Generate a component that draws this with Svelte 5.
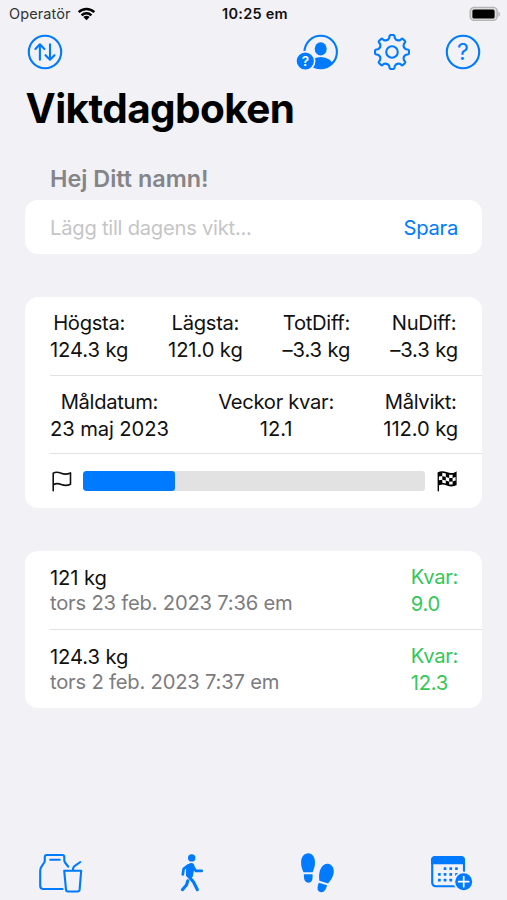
<script>
  let weight = '';

  const stats = [
    { label: 'Högsta:', value: '124.3 kg' },
    { label: 'Lägsta:', value: '121.0 kg' },
    { label: 'TotDiff:', value: '–3.3 kg' },
    { label: 'NuDiff:', value: '–3.3 kg' }
  ];

  const goals = [
    { label: 'Måldatum:', value: '23 maj 2023' },
    { label: 'Veckor kvar:', value: '12.1' },
    { label: 'Målvikt:', value: '112.0 kg' }
  ];

  const entries = [
    { weight: '121 kg', date: 'tors 23 feb. 2023 7:36 em', left: '9.0' },
    { weight: '124.3 kg', date: 'tors 2 feb. 2023 7:37 em', left: '12.3' }
  ];

  // (124.3 - 121) / (124.3 - 112)
  const progress = (3.3 / 12.3) * 100;

  // Outline of the settings gear, eight teeth around 0,0
  function gearPath() {
    const at = (deg, r) => {
      const a = (deg * Math.PI) / 180;
      return `${(Math.cos(a) * r).toFixed(2)} ${(Math.sin(a) * r).toFixed(2)}`;
    };
    let d = `M${at(-9, 16)}`;
    for (let i = 0; i < 8; i++) {
      const c = i * 45;
      d += `Q${at(c - 8.5, 17)} ${at(c - 5, 17)}L${at(c + 5, 17)}Q${at(c + 8.5, 17)} ${at(c + 9, 16)}`;
      d += `L${at(c + 11, 14.3)}Q${at(c + 22.5, 11.6)} ${at(c + 34, 14.3)}L${at(c + 36, 16)}`;
    }
    return d + 'Z';
  }

  // Calendar days as [column, row]
  const days = [[1, 0], [2, 0], [3, 0], [0, 1], [1, 1], [2, 1], [3, 1], [0, 2], [1, 2], [2, 2]];
</script>

<main>
  <div class="status-bar">
    <div class="carrier">
      <span>Operatör</span>
      <svg width="19" height="14" viewBox="0 0 18 14">
        <path d="M1.2 5.2a11 11 0 0 1 15.6 0M4.1 8.3a7 7 0 0 1 9.8 0" fill="none" stroke="#000" stroke-width="2.4" />
        <path d="M9 13.2 5.9 10.1a4.4 4.4 0 0 1 6.2 0Z" />
      </svg>
    </div>
    <span class="clock">10:25 em</span>
    <div class="battery">
      <svg width="32" height="16" viewBox="0 0 32 16">
        <rect x="1.2" y="1.4" width="27" height="13" rx="4" fill="#dcdcde" stroke="#b4b4b7" stroke-width="1.4" />
        <rect x="3.4" y="3.4" width="22.2" height="9.2" rx="1.6" />
        <path d="M29.5 5.4c1.8.8 1.8 4.4 0 5.2Z" fill="#a9a9ad" />
      </svg>
    </div>
  </div>

  <nav class="toolbar">
    <button aria-label="Sortera">
      <svg class="line" width="36" height="36" viewBox="0 0 36 36">
        <circle cx="18" cy="18" r="16.2" />
        <path d="M12.9 25.7V10.5M8.4 14.9l4.5-4.6 4.5 4.6M23 10.3v15.2M18.5 21.2l4.5 4.5 4.5-4.5" />
      </svg>
    </button>
    <div class="actions">
      <button aria-label="Profil">
        <svg width="44" height="38" viewBox="0 0 44 38">
          <defs>
            <clipPath id="avatar"><circle cx="25.7" cy="19" r="15.8" /></clipPath>
          </defs>
          <circle class="line" cx="25.7" cy="19" r="16.2" />
          <ellipse cx="25.7" cy="15.9" rx="6" ry="6.6" />
          <ellipse cx="25.7" cy="32.7" rx="12" ry="8.6" clip-path="url(#avatar)" />
          <circle class="gap" cx="10.3" cy="28" r="10.2" />
          <circle cx="10.3" cy="28" r="8.6" />
          <text class="light" x="10.3" y="32.8" font-size="13.5">?</text>
        </svg>
      </button>
      <button aria-label="Inställningar">
        <svg class="line" width="38" height="38" viewBox="-19 -19 38 38">
          <path d={gearPath()} />
          <circle r="5.8" />
        </svg>
      </button>
      <button aria-label="Hjälp">
        <svg width="36" height="36" viewBox="0 0 36 36">
          <circle class="line" cx="18" cy="18" r="16.2" />
          <text x="18" y="26.2" font-size="23">?</text>
        </svg>
      </button>
    </div>
  </nav>

  <h1>Viktdagboken</h1>
  <h2>Hej Ditt namn!</h2>

  <form class="card entry-form">
    <input type="text" placeholder="Lägg till dagens vikt..." bind:value={weight} />
    <button type="button">Spara</button>
  </form>

  <section class="card">
    <div class="row">
      {#each stats as stat}
        <div class="stat">
          <span>{stat.label}</span>
          <span class="value">{stat.value}</span>
        </div>
      {/each}
    </div>
    <div class="row">
      {#each goals as goal}
        <div class="stat">
          <span>{goal.label}</span>
          <span class="value">{goal.value}</span>
        </div>
      {/each}
    </div>
    <div class="row progress-row">
      <svg width="22" height="22" viewBox="0 0 22 22">
        <path d="M3.2 20.7V3.2C6 1.6 8.700 2.300 11.300 3.300C14.300 4.500 17.300 4.300 20.500 2.900V14.200C17.300 15.800 14.300 15.700 11.300 14.500C8.700 13.400 6 13.200 3.200 14.700" fill="none" stroke="#111" stroke-width="1.6" stroke-linecap="round" stroke-linejoin="round" />
      </svg>
      <div class="track">
        <div class="bar" style="width: {progress}%"></div>
      </div>
      <svg width="22" height="22" viewBox="0 0 22 22">
        <path d="M2.3 20.7V2.9C5 1.3 8.500 2 11 3C14 4.200 17 4 19.900 2.500V14.700C17 16.200 14 16 11 14.800C8.500 13.800 5 13.600 2.300 15" fill="#000" stroke="#000" stroke-width="1.4" stroke-linecap="round" />
        <path fill="#fff" d="M6.300 2.800L9.800 3.600V6.900L6.300 6.100ZM13.200 4.800L16.600 4.700V8L13.200 8.100ZM2.900 6.600L6.300 6.100V9.700L2.900 10.200ZM9.800 6.900L13.200 8.100V11.700L9.800 10.500ZM16.600 8L19.600 7V10.400L16.600 11.600ZM6.300 9.700L9.800 10.500V13.400L6.300 12.700ZM13.200 11.700L16.600 11.600V14.500L13.200 14.500Z" />
      </svg>
    </div>
  </section>

  <section class="card">
    {#each entries as entry}
      <div class="row">
        <div class="entry">
          <span class="value">{entry.weight}</span>
          <span class="date">{entry.date}</span>
        </div>
        <div class="left">
          <span>Kvar:</span>
          <span>{entry.left}</span>
        </div>
      </div>
    {/each}
  </section>

  <footer>
    <button aria-label="Mat">
      <svg class="line" width="46" height="42" viewBox="38 852 46 42">
        <path d="M62.5 889H43.5Q40.2 889 40.2 885.7V870.5Q40.2 868.5 41.5 866.6L44.2 862.5Q44.8 861.5 44.8 860V857Q44.8 855 46.8 855H62.3Q64.3 855 64.3 857V860Q64.3 861.5 65 862.5L68.2 866.7M50.2 859.8H59.7" />
        <path d="M64.2 870.7H81.2L79.6 889.7Q79.4 891.5 77.6 891.5H67.9Q66.2 891.5 66 889.7ZM72.8 870.5L73.2 868.3Q73.4 867 74.5 866.2L80.3 862" />
      </svg>
    </button>
    <button aria-label="Promenad">
      <svg width="26" height="42" viewBox="178.5 852 26 42">
        <circle cx="191.2" cy="857.9" r="3.7" />
        <path d="M185.6 866.5Q188 862.9 190.700 862.900Q194.500 863 194 867.500L192.300 876.500L189.500 879L185.500 876Z" />
        <g fill="none" stroke="#007aff" stroke-width="2.7" stroke-linecap="round" stroke-linejoin="round">
          <path d="M187.500 865.500L183.200 868.800L182.300 874.500M192.300 866.500L195.400 870.900H201.200" />
          <path d="M187.300 880.800L186 885L181.900 889.700M188.300 876.500L193 882L196.900 889.700" stroke-width="3.1" />
        </g>
      </svg>
    </button>
    <button aria-label="Steg">
      <svg width="36" height="42" viewBox="299 852 36 42">
        <defs>
          <g id="shoe">
            <path d="M303.5 872.3C301.8 868.5 300.9 865.5 301.1 861.8C301.3 856.8 304.3 853.3 308.2 853.3C312.5 853.3 315 857.5 315 862.3C315 866 314 869 312.6 872.3Z" />
            <path d="M303.9 874.3H312.5C312.9 879 312.2 882.7 308.5 882.7C304.8 882.7 303.7 879.5 303.9 874.3Z" />
          </g>
        </defs>
        <use href="#shoe" />
        <use href="#shoe" transform="translate(324.7 878) rotate(17) scale(-1 1) translate(-308.3 -868)" />
      </svg>
    </button>
    <button aria-label="Kalender">
      <svg width="44" height="42" viewBox="430 852 44 42">
        <rect class="line" x="432.200" y="857" width="31.800" height="29.2" rx="3.5" />
        <path d="M431 864.3V860.2Q431 856 435.2 856H460.8Q465 856 465 860.2V864.3Z" />
        {#each days as [col, row]}
          <rect x={438 + col * 5.7} y={867.3 + row * 5.7} width="2.7" height="2.7" rx="0.5" />
        {/each}
        <circle class="gap" cx="463.7" cy="881.7" r="10.1" />
        <circle cx="463.7" cy="881.7" r="8.5" />
        <path d="M458.7 881.7H468.7M463.7 876.7V886.7" stroke="#fff" stroke-width="1.7" stroke-linecap="round" />
      </svg>
    </button>
  </footer>
</main>

<style>
  :global(body) {
    background: #f1f1f6;
  }

  main {
    box-sizing: border-box;
    display: flex;
    flex-direction: column;
    height: 900px;
    overflow: hidden;
    font-family: Inter, 'Liberation Sans', sans-serif;
    font-size: 20.2px;
    letter-spacing: -0.3px;
    color: #111;
    background: #f1f1f6;
  }

  svg {
    display: block;
    flex: none;
  }

  button {
    display: block;
    padding: 0;
    border: 0;
    background: none;
    font: inherit;
    letter-spacing: -0.25px;
    color: #007aff;
    fill: #007aff;
  }

  .line {
    fill: none;
    stroke: #007aff;
    stroke-width: 2.1;
    stroke-linecap: round;
    stroke-linejoin: round;
  }

  .gap {
    fill: #f1f1f6;
  }

  text {
    text-anchor: middle;
    letter-spacing: 0;
  }

  .light {
    fill: #fff;
    font-weight: 600;
  }

  .status-bar {
    display: grid;
    grid-template-columns: 1fr auto 1fr;
    align-items: center;
    height: 27px;
    padding: 0 6px 0 9px;
    font-size: 14.5px;
    letter-spacing: 0;
  }

  .carrier {
    display: flex;
    align-items: center;
    gap: 6px;
    letter-spacing: 0.1px;
    color: #333;
  }

  .clock {
    font-weight: 600;
    letter-spacing: 0.25px;
  }

  .battery {
    display: flex;
    justify-content: flex-end;
  }

  .toolbar {
    display: flex;
    align-items: center;
    justify-content: space-between;
    height: 50.500px;
    padding: 0 26.5px 0 27.3px;
  }

  .actions {
    display: flex;
    align-items: center;
    gap: 34px;
  }

  h1 {
    margin: 6.500px 0 0 25.500px;
    font-size: 40.5px;
    line-height: 50px;
    letter-spacing: -0.6px;
    color: #000;
  }

  h2 {
    margin: 29.500px 0 6.500px 50px;
    font-size: 23.4px;
    font-weight: 600;
    line-height: 30px;
    letter-spacing: 0;
    color: #858589;
  }

  .card {
    margin: 0 25px 43px;
    border-radius: 13px;
    background: #fff;
    overflow: hidden;
  }

  .entry-form {
    display: flex;
    align-items: center;
    height: 54px;
    flex: none;
    padding: 0 24px 0 25px;
    box-sizing: border-box;
  }

  input {
    flex: 1;
    min-width: 0;
    padding: 0;
    border: 0;
    outline: none;
    background: none;
    font: inherit;
    letter-spacing: -0.25px;
  }

  input::placeholder {
    color: #c5c5c7;
    opacity: 1;
  }

  .row {
    box-sizing: border-box;
    display: flex;
    align-items: center;
    justify-content: space-between;
    height: 78.5px;
    margin-left: 25px;
    padding: 1px 24px 0 0;
    border-bottom: 1px solid #e2e2e4;
    line-height: 27px;
  }

  .row:last-child {
    border-bottom: 0;
  }

  .stat {
    display: flex;
    flex-direction: column;
    align-items: center;
  }

  .value {
    letter-spacing: -0.1px;
  }

  .progress-row {
    height: 54px;
    padding-top: 0;
  }

  .track {
    flex: 1;
    height: 20px;
    margin: 0 11px;
    border-radius: 3px;
    background: #e2e2e2;
    overflow: hidden;
  }

  .bar {
    height: 100%;
    border-radius: 3px;
    background: #007aff;
  }

  .entry,
  .left {
    display: flex;
    flex-direction: column;
  }

  .entry {
    line-height: 25px;
  }

  .date {
    color: #7c7c80;
    letter-spacing: -0.2px;
  }

  .left {
    color: #34c759;
  }

  footer {
    display: flex;
    align-items: flex-start;
    justify-content: space-between;
    margin-top: auto;
    height: 48px;
    padding: 0 33px 0 38px;
  }
</style>
